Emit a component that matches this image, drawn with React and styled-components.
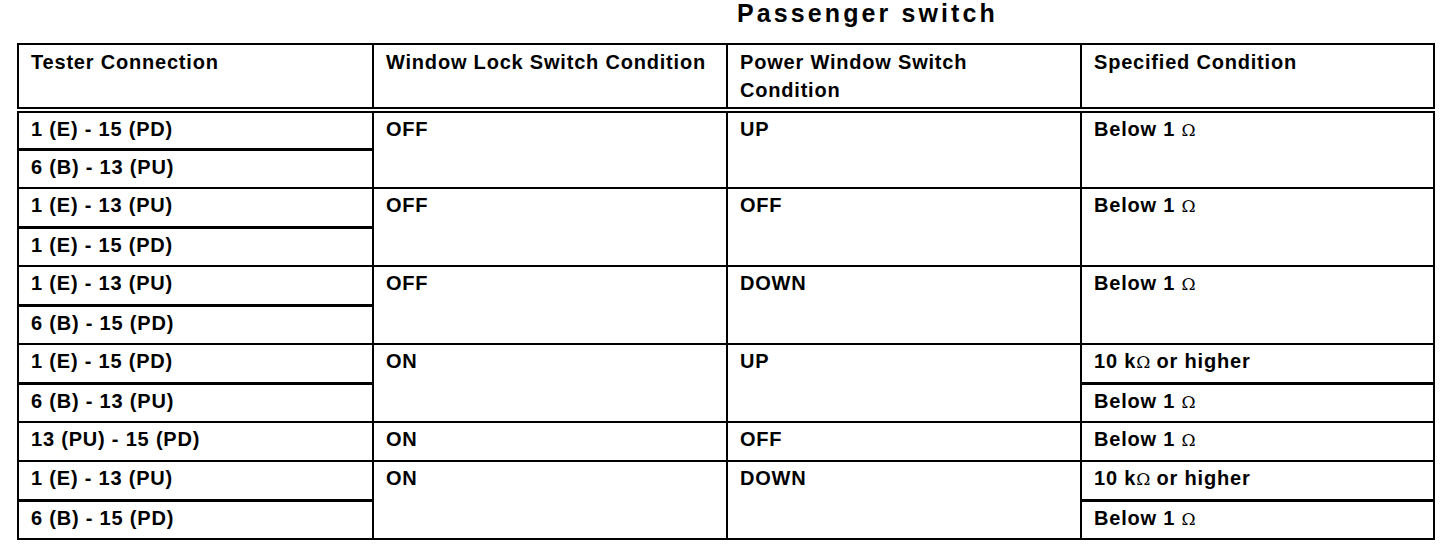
import React from "react";
import styled, { createGlobalStyle } from "styled-components";

const GlobalStyle = createGlobalStyle`
  html, body {
    margin: 0;
    padding: 0;
    background: #fff;
  }
  body {
    font-family: "Liberation Sans", Arial, Helvetica, sans-serif;
    color: #000;
  }
`;

const Page = styled.div`
  width: 1456px;
  height: 554px;
  background: #fff;
  overflow: hidden;
`;

const Title = styled.h2`
  margin: 0;
  padding-left: 737px;
  height: 43px;
  font-size: 25px;
  line-height: 27px;
  font-weight: bold;
  letter-spacing: 3.1px;
`;

const Table = styled.table`
  margin-left: 17px;
  width: 1416px;
  table-layout: fixed;
  border-collapse: collapse;
  border: 2px solid #000;
`;

const HeadCell = styled.th`
  border: 2px solid #000;
  border-bottom: 6px double #000;
  height: 59px;
  padding: 3px 11px 0 12px;
  vertical-align: top;
  text-align: left;
  font-size: 20px;
  line-height: 28px;
  font-weight: bold;
  letter-spacing: 0.8px;
`;

const Cell = styled.td`
  border: 2px solid #000;
  border-bottom-width: ${({ $thick }) => ($thick ? "3px" : "2px")};
  height: 39px;
  padding: 3px 11px 0 12px;
  vertical-align: top;
  font-size: 20px;
  line-height: 26px;
  font-weight: bold;
  letter-spacing: 0.8px;
  box-sizing: border-box;
`;

const Ohm = styled.span`
  font-family: "DejaVu Serif", "Liberation Serif", serif;
  font-weight: normal;
  font-size: 17px;
  letter-spacing: 0;
`;

const columns = [
  { title: "Tester Connection", width: 355 },
  { title: "Window Lock Switch Condition", width: 354 },
  { title: "Power Window Switch Condition", width: 354 },
  { title: "Specified Condition", width: 353 },
];

const below = "below";
const high = "high";

const groups = [
  { pins: ["1 (E) - 15 (PD)", "6 (B) - 13 (PU)"], lock: "OFF", power: "UP", spec: [below] },
  { pins: ["1 (E) - 13 (PU)", "1 (E) - 15 (PD)"], lock: "OFF", power: "OFF", spec: [below] },
  { pins: ["1 (E) - 13 (PU)", "6 (B) - 15 (PD)"], lock: "OFF", power: "DOWN", spec: [below] },
  { pins: ["1 (E) - 15 (PD)", "6 (B) - 13 (PU)"], lock: "ON", power: "UP", spec: [high, below] },
  { pins: ["13 (PU) - 15 (PD)"], lock: "ON", power: "OFF", spec: [below] },
  { pins: ["1 (E) - 13 (PU)", "6 (B) - 15 (PD)"], lock: "ON", power: "DOWN", spec: [high, below] },
];

const SpecText = ({ kind }) =>
  kind === high ? (
    <>
      10 k<Ohm>Ω</Ohm> or higher
    </>
  ) : (
    <>
      Below 1 <Ohm>Ω</Ohm>
    </>
  );

export default function App() {
  return (
    <Page>
      <GlobalStyle />
      <Title>Passenger switch</Title>
      <Table>
        <colgroup>
          {columns.map((c) => (
            <col key={c.title} style={{ width: c.width }} />
          ))}
        </colgroup>
        <thead>
          <tr>
            {columns.map((c) => (
              <HeadCell key={c.title}>{c.title}</HeadCell>
            ))}
          </tr>
        </thead>
        <tbody>
          {groups.map((g, gi) =>
            g.pins.map((pin, pi) => {
              const span = g.pins.length;
              const splitSpec = g.spec.length > 1;
              return (
                <tr key={`${gi}-${pi}`}>
                  <Cell $thick={pi === 0 && span > 1}>{pin}</Cell>
                  {pi === 0 && <Cell rowSpan={span}>{g.lock}</Cell>}
                  {pi === 0 && <Cell rowSpan={span}>{g.power}</Cell>}
                  {splitSpec ? (
                    <Cell $thick={pi === 0}>
                      <SpecText kind={g.spec[pi]} />
                    </Cell>
                  ) : (
                    pi === 0 && (
                      <Cell rowSpan={span}>
                        <SpecText kind={g.spec[0]} />
                      </Cell>
                    )
                  )}
                </tr>
              );
            })
          )}
        </tbody>
      </Table>
    </Page>
  );
}
